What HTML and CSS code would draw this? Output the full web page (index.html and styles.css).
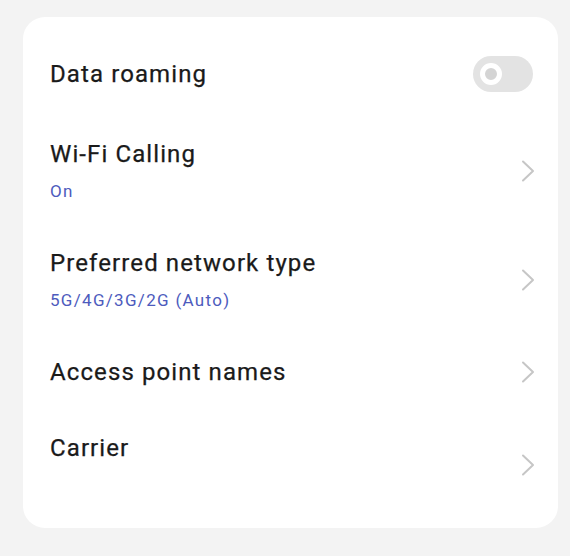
FILE: index.html
```html
<!DOCTYPE html>
<html>
<head>
<meta charset="utf-8">
<link rel="stylesheet" href="styles.css">
</head>
<body>
<div class="card">
  <div class="row">
    <div class="text"><div class="title">Data roaming</div></div>
    <div class="toggle"><span class="knob"></span></div>
  </div>
  <div class="row">
    <div class="text">
      <div class="title">Wi-Fi Calling</div>
      <div class="sub">On</div>
    </div>
    <svg class="chev" width="14" height="22" viewBox="0 0 14 22"><polyline points="2,1.5 12,11 2,20.5" fill="none" stroke="#c6c6c6" stroke-width="2" stroke-linecap="round" stroke-linejoin="round"/></svg>
  </div>
  <div class="row">
    <div class="text">
      <div class="title">Preferred network type</div>
      <div class="sub">5G/4G/3G/2G (Auto)</div>
    </div>
    <svg class="chev" width="14" height="22" viewBox="0 0 14 22"><polyline points="2,1.5 12,11 2,20.5" fill="none" stroke="#c6c6c6" stroke-width="2" stroke-linecap="round" stroke-linejoin="round"/></svg>
  </div>
  <div class="row">
    <div class="text"><div class="title">Access point names</div></div>
    <svg class="chev" width="14" height="22" viewBox="0 0 14 22"><polyline points="2,1.5 12,11 2,20.5" fill="none" stroke="#c6c6c6" stroke-width="2" stroke-linecap="round" stroke-linejoin="round"/></svg>
  </div>
  <div class="row">
    <div class="text">
      <div class="title">Carrier</div>
      <div class="sub"></div>
    </div>
    <svg class="chev" width="14" height="22" viewBox="0 0 14 22"><polyline points="2,1.5 12,11 2,20.5" fill="none" stroke="#c6c6c6" stroke-width="2" stroke-linecap="round" stroke-linejoin="round"/></svg>
  </div>
</div>
</body>
</html>
```
FILE: styles.css
```css
html, body {
  margin: 0;
  padding: 0;
  background: #f3f3f3;
}
body {
  font-family: Roboto, "Noto Sans", sans-serif;
  padding: 17px 12px 28px 23px;
}
.card {
  background: #ffffff;
  border-radius: 22px;
  padding: 15px 23px 9px 27px;
}
.row {
  display: flex;
  align-items: center;
  justify-content: space-between;
  padding: 24px 0;
}
.text {
  display: flex;
  flex-direction: column;
  gap: 13px;
}
.title {
  font-size: 24px;
  line-height: 28px;
  letter-spacing: 1.1px;
  color: #1a1a1a;
  -webkit-text-stroke: 0.25px #1a1a1a;
}
.sub {
  font-size: 17px;
  line-height: 20px;
  height: 20px;
  letter-spacing: 1.3px;
  color: #4d5bbd;
}
.toggle {
  position: relative;
  width: 60px;
  height: 36px;
  border-radius: 18px;
  background: #e3e3e3;
  margin-right: 2px;
}
.knob {
  position: absolute;
  left: 7px;
  top: 7px;
  width: 12px;
  height: 12px;
  border: 5px solid #ffffff;
  border-radius: 50%;
  background: #d4d4d4;
}
.chev {
  display: block;
}
```
